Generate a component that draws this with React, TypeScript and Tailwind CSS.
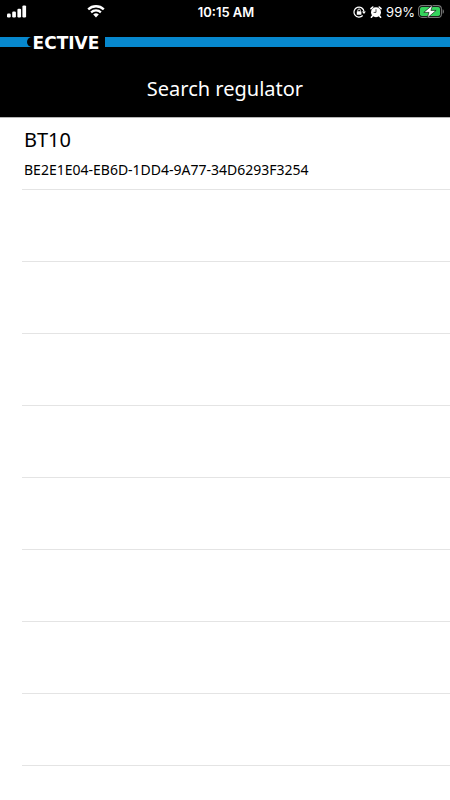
import React from "react";

const devices = [
  { name: "BT10", id: "BE2E1E04-EB6D-1DD4-9A77-34D6293F3254" },
];
const emptyRows = 8;

function SignalIcon() {
  return (
    <svg width="20" height="13" viewBox="0 0 20 13" fill="white" aria-hidden="true">
      <rect x="0" y="8.5" width="3.7" height="4" rx="1.2" />
      <rect x="5.2" y="6.5" width="3.7" height="6" rx="1.2" />
      <rect x="10.4" y="3.8" width="3.7" height="8.7" rx="1.2" />
      <rect x="15.4" y="0.4" width="3.7" height="12.1" rx="1.2" />
    </svg>
  );
}

function WifiIcon() {
  return (
    <svg width="18" height="13" viewBox="0 0 18 13" fill="none" aria-hidden="true">
      <path d="M1.2 4.4a11.2 11.2 0 0 1 15.6 0" stroke="white" strokeWidth="2.3" />
      <path d="M4.1 7.4a7 7 0 0 1 9.8 0" stroke="white" strokeWidth="2.2" />
      <path d="M9 12.4 6.2 9.6a4 4 0 0 1 5.6 0z" fill="white" />
    </svg>
  );
}

function RotationLockIcon() {
  return (
    <svg width="13" height="12" viewBox="0 0 13 12" fill="none" aria-hidden="true">
      <path d="M9.7 9.5A5 5 0 1 1 11 5.6" stroke="white" strokeWidth="1.2" />
      <path d="M8.9 5.4h4L11 8z" fill="white" />
      <rect x="3.8" y="5.2" width="4.6" height="3.5" rx="0.5" fill="white" />
      <path d="M4.8 5.4V4.3a1.3 1.3 0 0 1 2.6 0v1.1" stroke="white" strokeWidth="0.9" />
    </svg>
  );
}

function AlarmIcon() {
  return (
    <svg width="12" height="12" viewBox="0 0 12 12" fill="none" aria-hidden="true">
      <circle cx="6" cy="6.2" r="5" fill="white" />
      <path d="M1 2.6 2.8 1M11 2.6 9.2 1" stroke="white" strokeWidth="1.6" strokeLinecap="round" />
      <path d="m2.6 9.8-1.2 1.4M9.4 9.8l1.2 1.4" stroke="white" strokeWidth="1.6" strokeLinecap="round" />
      <path d="M6 3.2v3.2H3.6" stroke="black" strokeWidth="0.7" />
    </svg>
  );
}

function BatteryIcon() {
  return (
    <svg width="27" height="15" viewBox="0 0 27 15" fill="none" aria-hidden="true">
      <rect x="0.6" y="1.6" width="22.8" height="11.8" rx="3.4" stroke="#777777" strokeWidth="1.1" />
      <rect x="2" y="3" width="20" height="9" rx="1.8" fill="#34d35c" />
      <path d="M24.6 5.2c1.8.7 1.8 3.9 0 4.6z" fill="#777777" />
      <path
        d="M14.8 0.8 5.8 8.4h5.2l-1.9 5.8 9-7.8h-5.2z"
        fill="white"
        stroke="black"
        strokeWidth="0.6"
      />
    </svg>
  );
}

function StatusBar() {
  return (
    <div className="grid h-[23px] grid-cols-3 items-center pl-[7px] pr-[5px] font-['Inter','Liberation_Sans',sans-serif] text-[13px] leading-4 text-white">
      <div className="flex items-center gap-[60px]">
        <SignalIcon />
        <WifiIcon />
      </div>
      <div className="text-center font-semibold">10:15 AM</div>
      <div className="flex items-center justify-end">
        <RotationLockIcon />
        <span className="ml-1">
          <AlarmIcon />
        </span>
        <span className="ml-1 mr-[3px]">99%</span>
        <BatteryIcon />
      </div>
    </div>
  );
}

function BrandBar() {
  return (
    <div className="mt-3.5 flex h-2.5 bg-[#0788ce] pl-[27px]">
      <div className="flex w-[78px] items-center justify-center rounded-l-md bg-black pt-0.5 font-['DejaVu_Sans',sans-serif] text-[17px] leading-none font-bold text-white">
        ECTIVE
      </div>
    </div>
  );
}

export default function App() {
  return (
    <div className="min-h-screen bg-white font-['Noto_Sans','Open_Sans',sans-serif] text-black">
      <header className="border-b border-[#b5b5b5] bg-black">
        <StatusBar />
        <BrandBar />
        <h1 className="flex h-[70px] items-center justify-center pt-3.5 text-xl text-white">
          Search regulator
        </h1>
      </header>
      <ul className="pl-[22px]">
        {devices.map((device) => (
          <li key={device.id} className="h-[72px] border-b border-[#e4e4e4]">
            <button type="button" className="block h-full w-full pl-0.5 text-left">
              <span className="block text-xl leading-7">{device.name}</span>
              <span className="mt-1 block text-sm leading-6">{device.id}</span>
            </button>
          </li>
        ))}
        {Array.from({ length: emptyRows }, (_, i) => (
          <li key={i} className="h-[72px] border-b border-[#e4e4e4]" />
        ))}
      </ul>
    </div>
  );
}
